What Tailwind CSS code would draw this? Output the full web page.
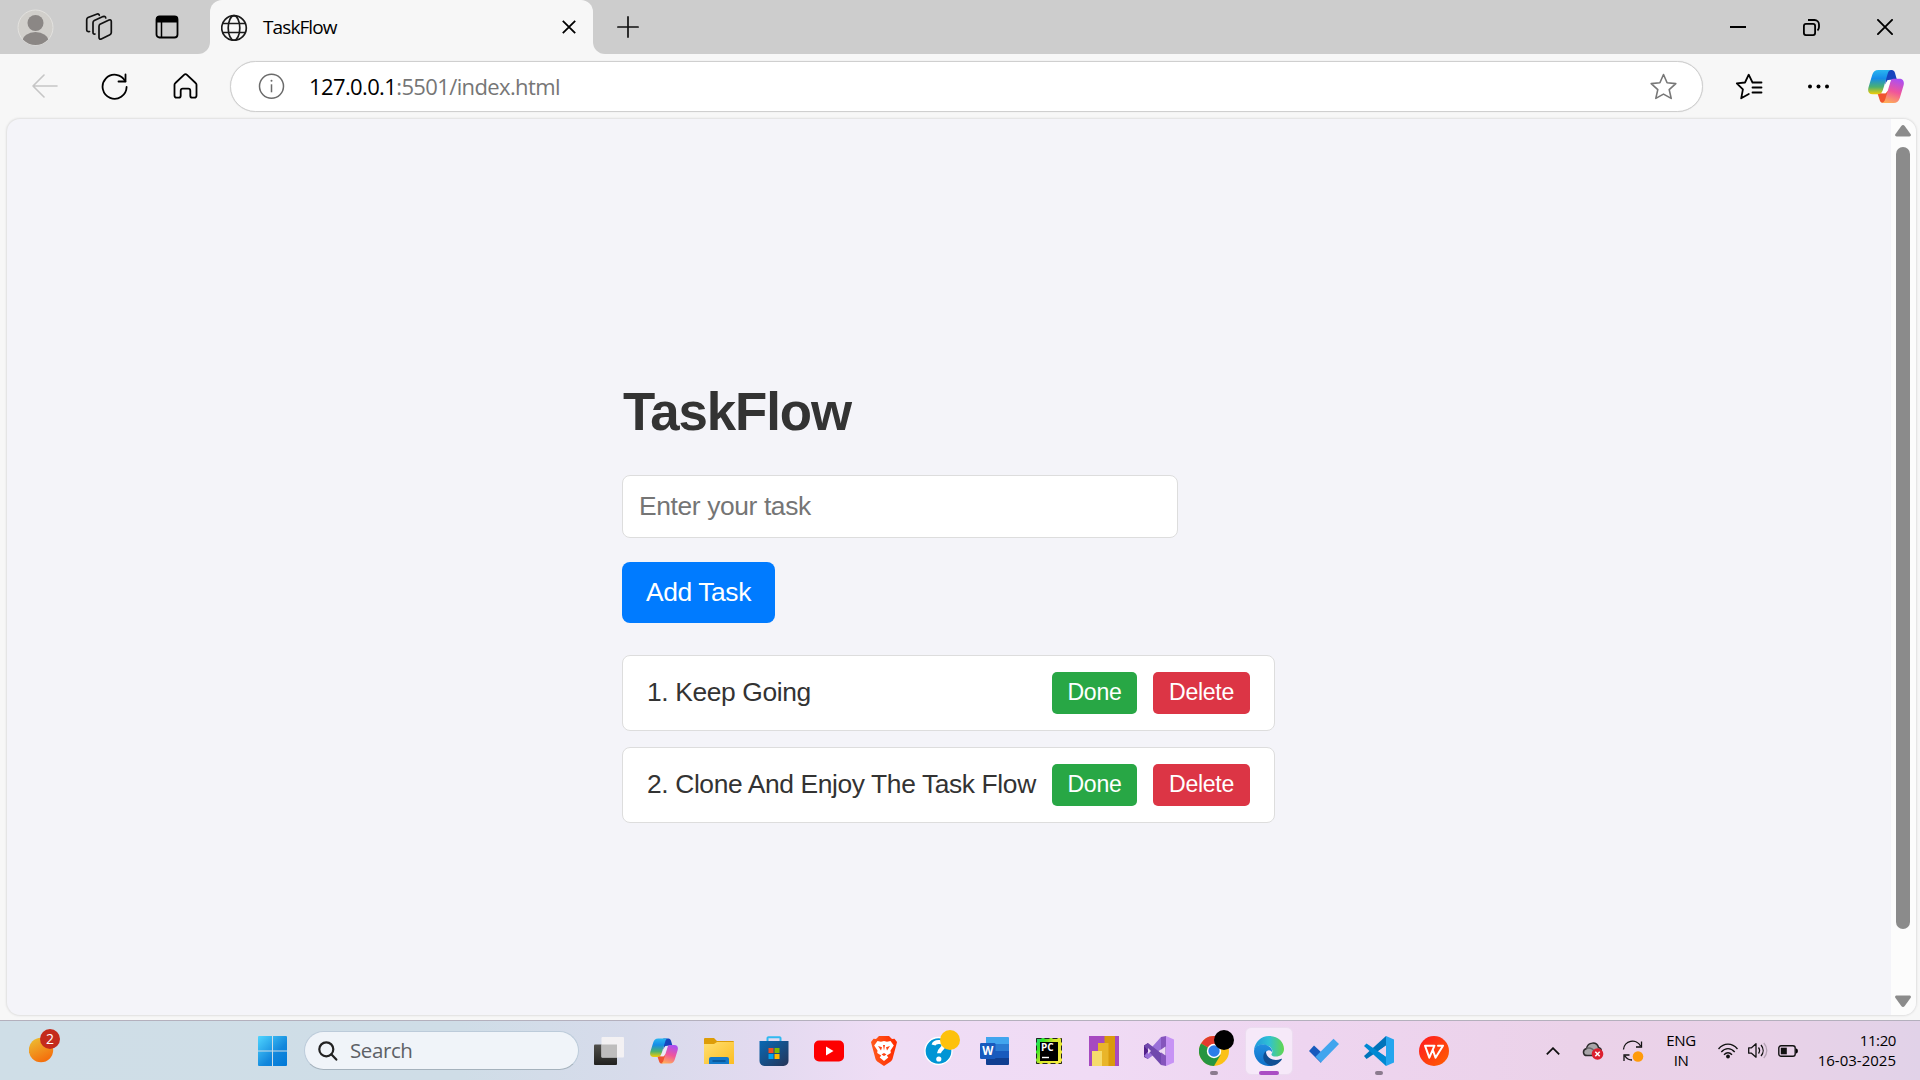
<!DOCTYPE html>
<html lang="en">
<head>
<meta charset="utf-8">
<title>TaskFlow</title>
<script src="https://cdn.jsdelivr.net/npm/@tailwindcss/browser@4"></script>
</head>
<body class="flex h-[1080px] w-[1920px] flex-col overflow-hidden bg-[#f7f7f7] font-['Open_Sans','Noto_Sans',sans-serif] text-black">

<!-- Tab strip -->
<header class="flex h-[54px] shrink-0 bg-[#f7f7f7]">
  <div class="flex w-[210px] items-center rounded-br-xl bg-[#cdcdcd] pl-[17px]">
    <svg class="h-[37px] w-[37px]" viewBox="0 0 37 37"><defs><clipPath id="av"><circle cx="18.5" cy="18.5" r="17.5"/></clipPath></defs><circle cx="18.5" cy="18.5" r="17.5" fill="#d1cfcb" stroke="#e3e2df"/><g clip-path="url(#av)" fill="#8b8785"><circle cx="18.5" cy="14" r="8"/><ellipse cx="18.5" cy="32.5" rx="13" ry="9.5"/></g></svg>
    <svg class="ml-[31px] h-[28px] w-[28px]" viewBox="0 0 28 28" fill="none" stroke="#111" stroke-width="1.7" stroke-linejoin="round" stroke-linecap="round"><path d="M15 11.2l9-4.200c1.300-.5 2.300 0 2.300 1.500v11c0 1-.5 1.800-1.400 2.200l-8.600 4.200c-1.300.6-2.300 0-2.300-1.400v-11c0-1 .2-1.800 1-2.300z"/><path d="M10 21c-1.200.3-2-.3-2-1.500V9.800c0-1 .4-1.700 1.300-2.200l8.700-4c1.300-.5 2.600-.2 2.700 1.400"/><path d="M4.500 18.500c-1.700.5-2.800-.2-2.800-1.700V6.700c0-1 .4-1.700 1.300-2.200l8.500-3.300c1.500-.5 2.700-.2 2.800 1.100"/></svg>
    <svg class="ml-[42px] h-[24px] w-[24px]" viewBox="0 0 24 24"><rect x="1.500" y="1.500" width="21" height="21" rx="3" fill="none" stroke="#000" stroke-width="1.800"/><path d="M1 7.500V4a3 3 0 013-3h16a3 3 0 013 3v3.500z"/><path d="M6.500 7v15" stroke="#000" stroke-width="1.500"/></svg>
  </div>
  <div class="flex flex-1 bg-[#cdcdcd]">
    <div class="flex w-[383px] items-center rounded-t-xl bg-[#f7f7f7] pl-[11px] pr-[17px]">
      <svg class="h-[27px] w-[27px]" viewBox="0 0 27 27" fill="none" stroke="#1b1b1b" stroke-width="1.700"><circle cx="13" cy="14" r="12.300"/><ellipse cx="13" cy="14" rx="5.800" ry="12.300"/><path d="M2 9.500h22M2 18.500h22"/></svg>
      <span class="ml-[15px] text-[19px] tracking-[-0.9px]">TaskFlow</span>
      <svg class="ml-auto h-[14px] w-[14px]" viewBox="0 0 14 14" stroke="#000" stroke-width="1.800"><path d="M.8.8l12.400 12.400M13.200.8L.8 13.200"/></svg>
    </div>
    <div class="flex flex-1 bg-[#f7f7f7]"><div class="flex flex-1 items-center rounded-bl-xl bg-[#cdcdcd] pl-[24px] pr-[27px]">
      <svg class="h-[22px] w-[22px]" viewBox="0 0 22 22" stroke="#111" stroke-width="1.700" stroke-linecap="round"><path d="M11 .9v20.200M.9 11h20.200"/></svg>
      <svg class="ml-auto h-[16px] w-[16px]" viewBox="0 0 16 16"><path d="M0 8h16" stroke="#000" stroke-width="2"/></svg>
      <svg class="ml-[57px] h-[17px] w-[17px]" viewBox="0 0 17 17" fill="none" stroke="#000" stroke-width="1.800"><rect x=".9" y="4.900" width="11.200" height="11.200" rx="2"/><path d="M5 1h6.500A4.500 4.500 0 0116 5.500v2.500c0 1.500-.4 2.500-1.500 3.500"/></svg>
      <svg class="ml-[57px] h-[16px] w-[16px]" viewBox="0 0 16 16" stroke="#000" stroke-width="1.900"><path d="M.3.3l15.400 15.400M15.700.3L.3 15.700"/></svg>
    </div></div>
  </div>
</header>

<!-- Toolbar -->
<nav class="flex h-[64px] shrink-0 items-center pl-[32px]">
  <svg class="h-[24px] w-[26px]" viewBox="0 0 26 24" fill="none" stroke="#c6c6c6" stroke-width="1.600" stroke-linecap="round" stroke-linejoin="round"><path d="M12 1L1 12l11 11M1 12h24"/></svg>
  <svg class="ml-[43px] h-[27px] w-[27px]" viewBox="0 0 27 27" fill="none" stroke="#000" stroke-width="1.800" stroke-linecap="round" stroke-linejoin="round"><path d="M24.300 8.300A12 12 0 1025.600 14"/><path d="M24.500 1.500v7h-7"/></svg>
  <svg class="ml-[45px] h-[26px] w-[25px]" viewBox="0 0 25 26" fill="none" stroke="#000" stroke-width="1.800" stroke-linejoin="round"><path d="M1.500 11.800c0-.8.300-1.300.9-1.800l8.600-8.200c1-.9 2-.9 3 0L22.600 10c.6.500.9 1 .9 1.800V22.500c0 1.400-.8 2.200-2.200 2.200h-2c-1.300 0-2-.7-2-2v-5c0-1.300-.7-2-2-2h-5.600c-1.300 0-2 .7-2 2v5c0 1.300-.7 2-2 2h-2c-1.400 0-2.200-.8-2.200-2.200z"/></svg>
  <div class="ml-[32px] flex h-[51px] w-[1473px] items-center rounded-full border border-[#cfcfcf] bg-white pl-[27px] pr-[25px] shadow-[0_0_1px_#cfcfcf]">
    <svg class="h-[28px] w-[28px]" viewBox="0 0 28 28" fill="none" stroke="#6b6b6b" stroke-width="1.500"><circle cx="13.500" cy="14.300" r="12"/><path d="M13.500 12.300v8"/><circle cx="13.500" cy="8.800" r="1" fill="#6b6b6b" stroke="none"/></svg>
    <span class="ml-[23px] text-[22px] tracking-[-0.62px] text-[#767676]"><span class="text-black">127.0.0.1</span>:5501/index.html</span>
    <svg class="ml-auto h-[27px] w-[27px]" viewBox="0 0 27 27" fill="none" stroke="#777" stroke-width="1.600" stroke-linejoin="round"><path d="M13.500 1.500l3.600 8.200 8.700.9-6.600 6 2 8.800-7.700-4.300-7.700 4.300 2-8.800-6.600-6 8.700-.9z"/></svg>
  </div>
  <svg class="ml-[32px] h-[27px] w-[28px]" viewBox="0 0 28 27" fill="none" stroke="#000" stroke-width="1.800" stroke-linejoin="round" stroke-linecap="round"><path d="M26.500 9.500h-9L13.700 1.700 10 9.500l-8.200.9 6.100 6L6.200 25.300l7.600-4.300M17.500 14.500h9M17.500 19.500h9"/></svg>
  <svg class="ml-[44px] h-[5px] w-[23px]" viewBox="0 0 23 5"><circle cx="3" cy="2.500" r="2"/><circle cx="11.500" cy="2.500" r="2"/><circle cx="20" cy="2.500" r="2"/></svg>
  <svg class="ml-[38px] h-[33px] w-[36px]" viewBox="0 0 38 34" preserveAspectRatio="none"><defs>
    <linearGradient id="ca" x1="0" y1="0" x2="0" y2="1"><stop offset="0" stop-color="#29b6f0"/><stop offset=".35" stop-color="#168ce8"/><stop offset=".7" stop-color="#4cb070"/><stop offset="1" stop-color="#f4cd05"/></linearGradient>
    <linearGradient id="cb" x1="0.600" y1="0" x2=".3" y2="1"><stop offset="0" stop-color="#ad4ff0"/><stop offset=".5" stop-color="#f0559b"/><stop offset="1" stop-color="#ffae58"/></linearGradient></defs>
    <path d="M18 0h7c2 0 3 1.500 3.500 3l2 7h-7c-3 0-4 2-5 5z" fill="#1744bd"/><path d="M10 24h8l5-4-4 12c-.5 1.200-1.500 2-3 2-2 0-3-1-3.500-2.500z" fill="#f0542f"/>
    <path d="M11 0h14c-2.500.2-3.600 1.500-4.300 4l-5 16.500C14.800 23.500 13 25 10 25H5c-4.500 0-5.500-3-4.500-7L4.500 5C5.500 2 7.500 0 11 0z" fill="url(#ca)"/>
    <path d="M27 9h6c4.500 0 5.500 3.500 4.500 7l-4 13c-1 3-3 5-6.500 5H14c2.500-.3 3.600-1.500 4.300-4l5-16.500C24 10.500 24.800 9 27 9z" fill="url(#cb)"/><path d="M20.500 10.500h3.700c-.6.700-1 2-1.300 3L19 24h-5c1-.8 1.500-2 2-3.500z" fill="#fff"/></svg>
</nav>

<!-- Page viewport -->
<div class="mt-px ml-[7px] flex h-[896px] w-[1909px] shrink-0 overflow-hidden rounded-[13px] bg-[#f4f4f9] shadow-[0_0_2px_1px_#dfdfdf]">
  <main class="flex flex-1 flex-col items-start pl-[615px] pt-[263px] font-['Liberation_Sans',sans-serif] text-[26.4px] tracking-[-0.38px] text-[#333]">
    <h1 class="pl-px text-[52.8px] leading-[60px] font-bold tracking-[-1.1px]">TaskFlow</h1>
    <input type="text" placeholder="Enter your task" class="mt-[33px] h-[63px] w-[556px] rounded-[8px] border border-[#ddd] bg-white px-[16px] tracking-[-0.38px] placeholder:text-[#757575]">
    <button class="mt-[24px] h-[61px] w-[153px] rounded-[8px] bg-[#007bff] tracking-[-0.38px] text-white">Add Task</button>
    <ul class="mt-[32px] flex w-[653px] flex-col gap-[16px]">
      <li class="flex h-[76px] items-center rounded-[8px] border border-[#ddd] bg-white px-[24px]"><span>1. Keep Going</span><button class="ml-auto h-[42px] w-[85px] rounded-[5px] bg-[#28a745] text-[23.1px] leading-none tracking-[-0.3px] text-white">Done</button><button class="ml-[16px] h-[42px] w-[97px] rounded-[5px] bg-[#dc3545] text-[23.1px] leading-none tracking-[-0.3px] text-white">Delete</button></li>
      <li class="flex h-[76px] items-center rounded-[8px] border border-[#ddd] bg-white px-[24px]"><span class="whitespace-nowrap">2. Clone And Enjoy The Task Flow</span><button class="ml-auto h-[42px] w-[85px] rounded-[5px] bg-[#28a745] text-[23.1px] leading-none tracking-[-0.3px] text-white">Done</button><button class="ml-[16px] h-[42px] w-[97px] rounded-[5px] bg-[#dc3545] text-[23.1px] leading-none tracking-[-0.3px] text-white">Delete</button></li>
    </ul>
  </main>
  <div class="flex w-[25px] flex-col items-center bg-[#fcfcfc] pt-[6px] pr-[1px]">
    <svg class="h-[12px] w-[16px]" viewBox="0 0 16 12" fill="#8b8b8b"><path d="M6.300.9c.9-1.200 2.500-1.200 3.400 0l5.800 8c.9 1.300.3 2.600-1.200 2.600H1.700C.2 11.500-.4 10.200.5 8.900z"/></svg>
    <div class="mt-[10px] h-[782px] w-[14px] rounded-full bg-[#8b8b8b]"></div>
    <svg class="mt-[66px] h-[12px] w-[16px] rotate-180" viewBox="0 0 16 12" fill="#8b8b8b"><path d="M6.300.9c.9-1.200 2.500-1.200 3.400 0l5.800 8c.9 1.300.3 2.600-1.200 2.600H1.700C.2 11.500-.4 10.200.5 8.900z"/></svg>
  </div>
</div>

<!-- Taskbar -->
<footer class="mt-[5px] flex h-[60px] shrink-0 items-center border-t border-[#b4b0bd] bg-[linear-gradient(90deg,#cfdee7_0%,#cfdde7_24%,#d7dbeb_33%,#e3daf0_40%,#efddf5_46%,#f0dbf5_57%,#eed5f0_68%,#ebd2e9_82%,#e9d2e8_92%,#e1d2e8_100%)]">
  <div class="relative ml-[29px] h-[60px] w-[32px]">
    <svg class="h-[60px] w-[32px]" viewBox="0 0 32 60"><defs><linearGradient id="we" x1="0" y1="0" x2=".5" y2="1"><stop offset="0" stop-color="#ecc335"/><stop offset="1" stop-color="#f4700d"/></linearGradient></defs><circle cx="12" cy="29" r="12.200" fill="url(#we)"/></svg>
    <span class="absolute top-[8px] left-[11px] flex h-[20px] w-[20px] items-center justify-center rounded-full bg-[#c42b1c] text-[14px] leading-none text-white">2</span>
  </div>
  <svg class="ml-[197px] h-[30px] w-[29px]" viewBox="0 0 29 30"><defs><linearGradient id="wi" gradientUnits="userSpaceOnUse" x1="0" y1="0" x2="29" y2="30"><stop stop-color="#4fd5ff"/><stop offset=".6" stop-color="#1287dc"/><stop offset="1" stop-color="#0078d7"/></linearGradient></defs><path fill="url(#wi)" d="M1 0h13v14.500H0V1a1 1 0 011-1zm14 0h13a1 1 0 011 1v13.500H15zM0 15.500h14V30H1a1 1 0 01-1-1zm15 0h14V29a1 1 0 01-1 1H15z"/></svg>
  <div class="ml-[17px] flex h-[39px] w-[275px] items-center rounded-full border border-[#bccbda] border-b-[#a5b2bd] bg-[#f0f4f9] pl-[13px]">
    <svg class="h-[20px] w-[20px]" viewBox="0 0 20 20" fill="none" stroke="#222" stroke-width="2.200" stroke-linecap="round"><circle cx="8.300" cy="8.300" r="7"/><path d="M13.300 13.300l5 5.300"/></svg>
    <span class="ml-[12px] text-[20.5px] tracking-[-0.4px] text-[#5d6166]">Search</span>
  </div>
  <div class="ml-[2px] flex w-[880px] items-center">
    <!-- Task view -->
    <div class="flex w-[55px] justify-center"><svg class="h-[30px] w-[30px]" viewBox="0 0 30 30"><defs><linearGradient id="tv" x2="0" y2="1"><stop stop-color="#51504c"/><stop offset="1" stop-color="#21211f"/></linearGradient></defs><rect y="8.500" width="23" height="20.500" rx="1" fill="url(#tv)"/><rect x="7.500" y="1" width="22.500" height="20.500" rx="1" fill="#f3f1f3"/><rect x="7.500" y="8.500" width="15.500" height="13" fill="#bebdbd"/></svg></div>
    <!-- Copilot -->
    <div class="flex w-[55px] justify-center"><svg class="h-[26px] w-[28px]" viewBox="0 0 38 34"><path d="M18 0h7c2 0 3 1.500 3.500 3l2 7h-7c-3 0-4 2-5 5z" fill="#1744bd"/><path d="M10 24h8l5-4-4 12c-.5 1.200-1.500 2-3 2-2 0-3-1-3.500-2.500z" fill="#f0542f"/><path d="M11 0h14c-2.500.2-3.600 1.500-4.300 4l-5 16.500C14.800 23.500 13 25 10 25H5c-4.500 0-5.500-3-4.500-7L4.500 5C5.500 2 7.500 0 11 0z" fill="url(#ca)"/><path d="M27 9h6c4.500 0 5.500 3.500 4.500 7l-4 13c-1 3-3 5-6.500 5H14c2.500-.3 3.600-1.500 4.300-4l5-16.500C24 10.500 24.800 9 27 9z" fill="url(#cb)"/><path d="M20.500 10.500h3.700c-.6.700-1 2-1.300 3L19 24h-5c1-.8 1.500-2 2-3.500z" fill="#efe8f6"/></svg></div>
    <!-- Explorer -->
    <div class="flex w-[55px] justify-center"><svg class="h-[28px] w-[30px]" viewBox="0 0 30 28"><defs><linearGradient id="fo" x2="1" y2="1"><stop stop-color="#ffdf70"/><stop offset="1" stop-color="#fcbd22"/></linearGradient></defs><path d="M0 2a1 1 0 011-1h9l3 3h16a1 1 0 011 1v8H0z" fill="#dd9c07"/><path d="M0 7h10l3-2h17v22H0z" fill="url(#fo)"/><path d="M5 27v-5a2 2 0 012-2h16a2 2 0 012 2v5z" fill="#1379c9"/><path d="M8.500 24h13" stroke="#064988" stroke-width="1.300"/></svg></div>
    <!-- Store -->
    <div class="flex w-[55px] justify-center"><svg class="h-[30px] w-[30px]" viewBox="0 0 30 30"><defs><linearGradient id="st" x2="1" y2="1"><stop stop-color="#0869b5"/><stop offset="1" stop-color="#263558"/></linearGradient></defs><path d="M8.500 6V2.500A1 1 0 019.500 1.300h11a1 1 0 011 1.200V6" fill="none" stroke="#31b9f0" stroke-width="2"/><path d="M.5 5h29v20a5 5 0 01-5 5h-19a5 5 0 01-5-5z" fill="url(#st)"/><path fill="#f25022" d="M9.500 12h5v5h-5z"/><path fill="#7fba00" d="M15.500 12h5v5h-5z"/><path fill="#00a4ef" d="M9.500 18h5v5h-5z"/><path fill="#ffb900" d="M15.500 18h5v5h-5z"/></svg></div>
    <!-- YouTube -->
    <div class="flex w-[55px] justify-center"><svg class="h-[22px] w-[30px]" viewBox="0 0 30 22"><rect y=".5" width="30" height="21" rx="5" fill="#fe0000"/><path d="M12 6.500l7.500 4.500-7.500 4.500z" fill="#fff"/></svg></div>
    <!-- Brave -->
    <div class="flex w-[55px] justify-center"><svg class="h-[30px] w-[26px]" viewBox="0 0 26 30"><defs><linearGradient id="br" x2="1" y2="0"><stop stop-color="#ff5a1c"/><stop offset="1" stop-color="#ff2a00"/></linearGradient></defs><path d="M8 0h10l3 3 2.500-.3L26 6l-1 4-3.500 13c-.5 1.500-1.500 2.300-2.500 3L13 30l-6-4c-1-.7-2-1.500-2.500-3L1 10 0 6l2.500-3.300L5 3z" fill="url(#br)"/><path d="M6.500 5l3.500.7L13 5l3 .7 3.500-.7 3.300 4.500-3.300 5 .3 2.500-4 2.500 1.500 2L13 25l-4.300-3.500 1.500-2-4-2.500.3-2.500L3.200 9.500z" fill="#fff"/><path d="M7 10l4 1.200-1 3.300zm12 0l-4 1.200 1 3.300zM10.500 18.500L13 17l2.500 1.500L13 20zM12 9l1 5.500L14 9z" fill="#ff4110"/></svg></div>
    <!-- Help -->
    <div class="relative flex w-[55px] justify-center"><svg class="h-[30px] w-[30px]" viewBox="0 0 30 30"><circle cx="14.500" cy="15" r="13.500" fill="#0095d5" stroke="#fff" stroke-width="1.300"/><path d="M9.500 9c1-3.500 9.500-4.500 10 .3.200 3.500-4.500 3.700-4.500 8" fill="none" stroke="#fff" stroke-width="4"/><circle cx="14.800" cy="23" r="2.600" fill="#fff"/></svg><i class="absolute top-[-6px] left-[29px] h-[20px] w-[20px] rounded-full bg-[#fdc10b]"></i></div>
    <!-- Word -->
    <div class="flex w-[55px] justify-center"><svg class="h-[28px] w-[30px]" viewBox="0 0 30 28"><path d="M7 0h22a1 1 0 011 1v6H7z" fill="#41a5ee"/><path d="M7 7h23v7H7z" fill="#2b7cd3"/><path d="M7 14h23v7H7z" fill="#185abd"/><path d="M7 21h23v6a1 1 0 01-1 1H8a1 1 0 01-1-1z" fill="#103f91"/><rect x="1" y="6" width="15.500" height="16" rx="1.300" fill="#185abd"/><text x="8.700" y="18" text-anchor="middle" font-family="Open Sans" font-weight="700" font-size="11.500" fill="#fff">W</text></svg></div>
    <!-- PyCharm -->
    <div class="flex w-[55px] justify-center"><svg class="h-[26px] w-[26px]" viewBox="0 0 26 26"><defs><linearGradient id="pc" x2="1" y2=".6"><stop stop-color="#21d789"/><stop offset=".25" stop-color="#35e526"/><stop offset=".55" stop-color="#d6e72b"/><stop offset="1" stop-color="#f2ec42"/></linearGradient></defs><rect width="26" height="26" fill="url(#pc)"/><rect x=".5" y=".5" width="25" height="25" fill="none" stroke="#222" stroke-dasharray="5 3"/><rect x="4" y="4" width="18" height="19" fill="#000"/><text x="5" y="13" font-family="Open Sans" font-weight="700" font-size="10" fill="#fff">PC</text><path d="M6 19.500h7" stroke="#fff" stroke-width="1.400"/></svg></div>
    <!-- Power BI -->
    <div class="flex w-[55px] justify-center"><svg class="h-[30px] w-[30px]" viewBox="0 0 30 30"><path fill="#a649c0" d="M0 0h30v30H0z"/><path fill="#d99a0c" d="M15.500 0H26v30H15.500z"/><path fill="#e9b52a" d="M9 7h10.500v23H9z"/><path fill="#f6db6d" d="M3 15h10v15H3z"/></svg></div>
    <!-- Visual Studio -->
    <div class="flex w-[55px] justify-center"><svg class="h-[30px] w-[30px]" viewBox="0 0 30 30"><path d="M0 9.500l4-2.500v16l-4-2z" fill="#52218a"/><path d="M0 20l17-19 5 0v9L4 23z" fill="#9a70d8"/><path d="M0 10l4-3 18 14v8l-5 0z" fill="#7048ad"/><path d="M4 12v6l3-3z" fill="#ecdaf3"/><path d="M22 0l8 3.500v23L22 30z" fill="#c793f5"/><path d="M17 1l5-1v30l-5-1 0-9 0-10z" fill="#8555bd"/><path d="M21.500 10.500v9L15 15z" fill="#ecdaf3"/></svg></div>
    <!-- Chrome -->
    <div class="relative flex w-[55px] justify-center"><svg class="h-[30px] w-[30px]" viewBox="0 0 30 30"><circle cx="15" cy="15" r="15" fill="#fbc116"/><path d="M15 15L2 7.500A15 15 0 0128 7.500z" fill="#e33b2e"/><path d="M15 15L2 7.500A15 15 0 0015 30l6.500-11z" fill="#269541"/><path d="M15 7.500h13L15 15z" fill="#e33b2e"/><circle cx="15" cy="15" r="7.200" fill="#fff"/><circle cx="15" cy="15" r="5.700" fill="#2b7de9"/></svg><i class="absolute top-[-6px] left-[28px] h-[20px] w-[20px] rounded-full bg-black"></i><i class="absolute top-[35px] left-[24px] h-[4px] w-[8px] rounded-full bg-[#8b7b8e]"></i></div>
    <!-- Edge -->
    <div class="relative flex w-[55px] justify-center"><div class="flex h-[48px] w-[48px] items-center justify-center rounded-md border border-[#ecdcf0] bg-[#f6e9f9]"><svg class="h-[30px] w-[30px]" viewBox="0 0 30 30"><defs><linearGradient id="ea" y1=".5" x2="1" y2=".5"><stop stop-color="#2298dc"/><stop offset=".5" stop-color="#2fc1d5"/><stop offset="1" stop-color="#62d64d"/></linearGradient><linearGradient id="eb" x2="0" y2="1"><stop stop-color="#2290e0"/><stop offset="1" stop-color="#0f6fc8"/></linearGradient></defs><path d="M0 14C1 6 7 0 15 0c9 0 15 6 15 13 0 5-4 7.500-8 7.500-3.500 0-5-1.300-4.500-2.500C20 14 17 10 11 9 6 8.300 2 10 0 14z" fill="url(#ea)"/><path d="M0 15C.5 10 5.500 8 10 8.500c5 .6 8.500 4 8 7.500-1-2-5-3-6.500 1-1.500 5 2 12 8 12.300C9 32.500 0 24.500 0 15z" fill="url(#eb)"/><path d="M12 15c-5 4-3 13 5 14.700 5 .3 8.500-3 10.800-6.200.3-.7-.3-1-1-.6C20 26 11.500 22 12 15z" fill="#114f94"/></svg></div><i class="absolute top-[44px] left-[18px] h-[4px] w-[20px] rounded-full bg-[#aa4cc4]"></i></div>
    <!-- To Do -->
    <div class="flex w-[55px] justify-center"><svg class="h-[25px] w-[30px]" viewBox="0 0 30 25"><path d="M0 13l5-5.500 8 7.500L12 25z" fill="#185abd"/><path d="M6.500 18.700L24.500.7 30 6 12 24.500z" fill="#41a5ee"/></svg></div>
    <!-- VS Code -->
    <div class="relative flex w-[55px] justify-center"><svg class="h-[30px] w-[30px]" viewBox="0 0 30 30"><path d="M0 20l2.500 3L24 8.500l-2-8.500z" fill="#0074ba"/><path d="M0 10l2.500-2.500L24 22l-2 8z" fill="#0089d3"/><path d="M22 0l8 3.500v23L22 30z" fill="#25a5ee"/><path d="M22 9.500v11L14.500 15z" fill="#eed4ee"/></svg><i class="absolute top-[35px] left-[24px] h-[4px] w-[8px] rounded-full bg-[#8b7b8e]"></i></div>
    <!-- WPS -->
    <div class="flex w-[55px] justify-center"><svg class="h-[30px] w-[30px]" viewBox="0 0 30 30"><defs><linearGradient id="wp" x2="1" y2="1"><stop stop-color="#ff1721"/><stop offset="1" stop-color="#ff6200"/></linearGradient></defs><circle cx="15" cy="15" r="15" fill="url(#wp)"/><path d="M15.500 9.700H6l4.300 12 5-11.500M14 14.500l2.500 7.200L24 9.700h-5" fill="none" stroke="#fff" stroke-width="2" stroke-linejoin="round" stroke-linecap="round"/></svg></div>
  </div>
  <!-- System tray -->
  <div class="mr-[24px] ml-auto flex items-center">
    <svg class="h-[8px] w-[14px]" viewBox="0 0 14 8" fill="none" stroke="#111" stroke-width="1.800"><path d="M.8 7.300L7 1.200l6.200 6.100"/></svg>
    <svg class="ml-[22px] h-[18px] w-[22px]" viewBox="0 0 22 18"><path d="M5 13.500C.8 13.500 0 8 4.500 6.500 6-.5 15-.5 16.500 5.500c4.500 1 3 8-1 8z" fill="#a8a5a8" stroke="#2c2a2c" stroke-width="1.500"/><path d="M4.500 6.500c4-2 7 1 11 6" fill="none" stroke="#6d6a6d" stroke-width="1.500"/><circle cx="15.500" cy="12" r="5.800" fill="#dc1f2f"/><path d="M13.300 9.800l4.400 4.400m0-4.400l-4.400 4.400" stroke="#fff" stroke-width="1.500"/></svg>
    <svg class="ml-[18px] h-[22px] w-[22px]" viewBox="0 0 22 22" fill="none" stroke="#111" stroke-width="1.300"><path d="M1.500 9.500a9 9 0 0117-3.500M19.500 1.500V7H14M2 21v-6h5.500M3 16c1.500 2.500 4 4 7 4"/><circle cx="16" cy="16.500" r="5.300" fill="#ff9b0a" stroke="none"/></svg>
    <div class="ml-[20px] w-[34px] pb-[2px] text-center text-[15px] leading-[20px] tracking-[-0.4px]">ENG<br>IN</div>
    <svg class="ml-[20px] h-[16px] w-[20px]" viewBox="0 0 20 16" fill="none" stroke="#111" stroke-width="1.400"><path d="M.5 6C6-.5 14-.5 19.500 6M3.300 9c4-4.500 9.400-4.500 13.400 0M6 11.700c2.500-2.600 5.500-2.600 8 0"/><circle cx="10" cy="13.500" r="1.900" fill="#111" stroke="none"/></svg>
    <svg class="ml-[10px] h-[17px] w-[20px]" viewBox="0 0 20 17" fill="none" stroke="#111" stroke-width="1.300"><path d="M.7 5.800h2.800L8 1.800v13.400l-4.500-4H.7z" stroke-linejoin="round"/><path d="M10.500 5.500c1.300 1.800 1.300 4.200 0 6M13 3c2.800 3.300 2.800 7.700 0 11"/><path d="M15.800 1c4 4.500 4 10.500 0 15" stroke="#b5a3b4"/></svg>
    <svg class="ml-[10px] h-[12px] w-[21px]" viewBox="0 0 21 12"><rect x=".8" y=".8" width="16.400" height="10.400" rx="2.300" fill="none" stroke="#111" stroke-width="1.400"/><rect x="2.800" y="2.700" width="6" height="6.600" fill="#111"/><path d="M18 3.500c2.500 0 2.500 5 0 5z"/></svg>
    <div class="ml-[17px] w-[80px] pb-[2px] text-right text-[15px] leading-[20px] whitespace-nowrap"><span class="tracking-[-0.4px]">11:20</span><br>16-03-2025</div>
  </div>
</footer>
</body>
</html>
